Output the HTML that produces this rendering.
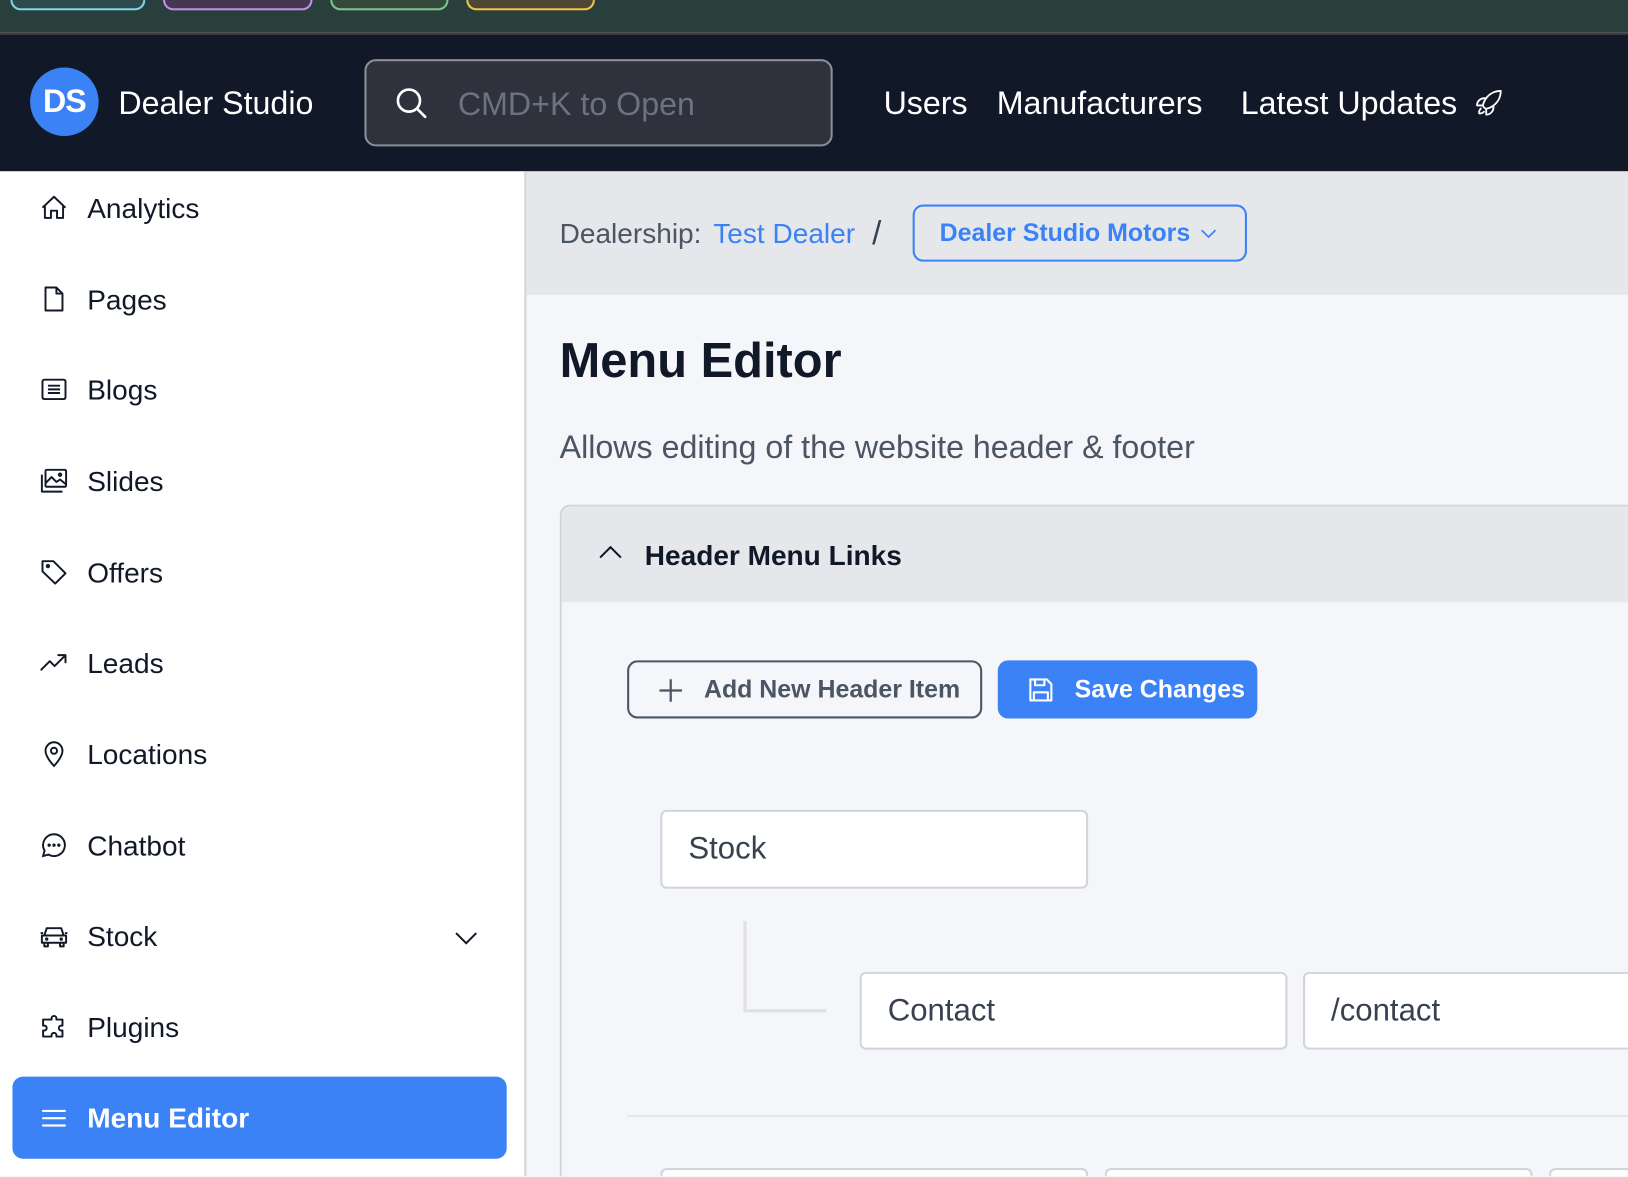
<!DOCTYPE html>
<html style="overflow:hidden"><head><meta charset="utf-8"><style>
html,body{margin:0;padding:0;width:1628px;height:1177px;overflow:hidden;background:#f5f6f9;font-family:"Liberation Sans",sans-serif}
#w{position:absolute;left:0;top:0;width:1568px;height:1133px;transform:scale(1.03827);transform-origin:0 0;background:#f5f6f9;overflow:hidden}
.a{position:absolute}
.si{position:absolute;left:38px;width:28px;height:28px}
.st{position:absolute;left:84px;font-size:27px;color:#111827;line-height:30px}
.inp{position:absolute;background:#fff;border:2px solid #d1d5db;border-radius:6px;box-sizing:border-box;font-size:30px;color:#374151;padding-left:25px;display:flex;align-items:center}
</style></head><body><div id="w">
<div class="a" style="left:0;top:0;width:1568px;height:31px;background:#293f3b"></div>
<div class="a" style="left:0;top:31px;width:1568px;height:2px;background:#3d3d3d"></div>
<div class="a" style="left:10px;top:0;width:126px;height:8px;border:2px solid #7dd3e8;border-top:none;border-radius:0 0 10px 10px;background:#2f4a4c"></div>
<div class="a" style="left:157px;top:0;width:140px;height:8px;border:2px solid #c48cf0;border-top:none;border-radius:0 0 10px 10px;background:#43384f"></div>
<div class="a" style="left:318px;top:0;width:110px;height:8px;border:2px solid #7cc58a;border-top:none;border-radius:0 0 10px 10px;background:#34493a"></div>
<div class="a" style="left:449px;top:0;width:120px;height:8px;border:2px solid #f2c34a;border-top:none;border-radius:0 0 10px 10px;background:#4d4833"></div>
<div class="a" style="left:0;top:33px;width:1568px;height:132px;background:#111827"></div>
<div class="a" style="left:29px;top:65px;width:66px;height:66px;border-radius:50%;background:#3b82f6;color:#fff;font-weight:bold;font-size:31px;text-align:center;line-height:66px;letter-spacing:-1px">DS</div>
<div class="a" style="left:114px;top:82px;font-size:31px;color:#fff;line-height:36px">Dealer Studio</div>
<div class="a" style="left:351px;top:57px;width:451px;height:84px;box-sizing:border-box;border:2px solid #8b8e96;border-radius:11px;background:#2f313d"></div>
<svg class="a" style="left:379px;top:82px" width="34" height="34" viewBox="0 0 24 24" fill="none" stroke="#fff" stroke-width="1.8" stroke-linecap="round"><circle cx="10.5" cy="10.5" r="7.5"/><path d="M16 16l5.5 5.5"/></svg>
<div class="a" style="left:441px;top:83px;font-size:31px;color:#6b7280;line-height:36px">CMD+K to Open</div>
<div class="a" style="left:851px;top:82px;font-size:31px;color:#fff;line-height:36px">Users</div>
<div class="a" style="left:960px;top:82px;font-size:31px;color:#fff;line-height:36px">Manufacturers</div>
<div class="a" style="left:1195px;top:82px;font-size:31px;color:#fff;line-height:36px">Latest Updates</div>
<svg class="a" style="left:1420px;top:85px" width="28" height="28" viewBox="0 0 24 24" fill="none" stroke="#fff" stroke-width="1.5" stroke-linejoin="round"><path d="M15.6 14.4a6 6 0 01-5.8 7.4v-4.8M15.6 14.4A15 15 0 0021.8 2.2 15 15 0 009.6 8.4m6 6a15 15 0 01-5.9 2.6M9.6 8.4a6 6 0 00-7.4 5.8H7m2.6-5.8A15 15 0 007 14.2m2.8 2.8c-.1 0-.2.1-.3.1a15 15 0 01-2.6-2.6l.1-.3M5.8 16.4a4.5 4.5 0 00-1.8 4.3 4.5 4.5 0 004.3-1.8"/></svg>
<div class="a" style="left:0;top:165px;width:505px;height:968px;background:#fff;border-right:2px solid #d1d5db"></div>
<svg class="si" style="top:186px" viewBox="0 0 24 24" fill="none" stroke="#111827" stroke-width="1.6" stroke-linejoin="round"><path d="M2.5 12L12 3l9.5 9M4.5 10v10.5h5v-6h5v6h5V10"/></svg>
<div class="st" style="top:186px">Analytics</div>
<svg class="si" style="top:274px" viewBox="0 0 24 24" fill="none" stroke="#111827" stroke-width="1.6" stroke-linejoin="round"><path d="M5 2.5h9l5 5v14H5z M14 2.5v5h5"/></svg>
<div class="st" style="top:274px">Pages</div>
<svg class="si" style="top:361px" viewBox="0 0 24 24" fill="none" stroke="#111827" stroke-width="1.6"><rect x="2.5" y="4" width="19" height="16" rx="1.5"/><path d="M7 9h10M7 12h10M7 15h10"/></svg>
<div class="st" style="top:361px">Blogs</div>
<svg class="si" style="top:449px" viewBox="0 0 24 24" fill="none" stroke="#111827" stroke-width="1.6" stroke-linejoin="round"><rect x="5" y="3" width="17" height="14" rx="1"/><path d="M2 7v14h17M5 14l5-5 4 4 3-2 5 4"/><circle cx="17" cy="7" r="1"/></svg>
<div class="st" style="top:449px">Slides</div>
<svg class="si" style="top:537px" viewBox="0 0 24 24" fill="none" stroke="#111827" stroke-width="1.6" stroke-linejoin="round"><path d="M2.5 3h9l10 10-8.5 8.5-10.5-10z"/><circle cx="7" cy="7" r="1"/></svg>
<div class="st" style="top:537px">Offers</div>
<svg class="si" style="top:624px" viewBox="0 0 24 24" fill="none" stroke="#111827" stroke-width="1.6" stroke-linejoin="round" stroke-linecap="round"><path d="M1.5 18l7-7 4 4 9-9M15.5 6h6v6"/></svg>
<div class="st" style="top:624px">Leads</div>
<svg class="si" style="top:712px" viewBox="0 0 24 24" fill="none" stroke="#111827" stroke-width="1.6"><path d="M12 22s-7-7-7-12.5a7 7 0 0114 0C19 15 12 22 12 22z"/><circle cx="12" cy="9.5" r="2.5"/></svg>
<div class="st" style="top:712px">Locations</div>
<svg class="si" style="top:800px" viewBox="0 0 24 24" fill="none" stroke="#111827" stroke-width="1.6"><path d="M12 3a9 9 0 00-7.8 13.5L3 21l4.5-1.2A9 9 0 1012 3z"/><circle cx="8" cy="12" r=".6" fill="#111827"/><circle cx="12" cy="12" r=".6" fill="#111827"/><circle cx="16" cy="12" r=".6" fill="#111827"/></svg>
<div class="st" style="top:800px">Chatbot</div>
<svg class="si" style="top:887px" viewBox="0 0 24 24" fill="none" stroke="#111827" stroke-width="1.6" stroke-linejoin="round"><path d="M2 12h20v6H2zM4 12l2-6h12l2 6M4 18v3h3v-3M17 18v3h3v-3M1 10h2M21 10h2"/><circle cx="6" cy="15" r=".6"/><circle cx="18" cy="15" r=".6"/></svg>
<div class="st" style="top:887px">Stock</div>
<svg class="a" style="left:436px;top:890px" width="26" height="26" viewBox="0 0 24 24" fill="none" stroke="#111827" stroke-width="1.8"><path d="M3 8l9 9 9-9"/></svg>
<svg class="si" style="top:975px" viewBox="0 0 24 24" fill="none" stroke="#111827" stroke-width="1.6" stroke-linejoin="round"><path d="M10 5a2 2 0 114 0v1h5v5h-1a2 2 0 100 4h1v5h-5v-1a2 2 0 10-4 0v1H3v-5h1a2 2 0 100-4H3V6h7z"/></svg>
<div class="st" style="top:975px">Plugins</div>
<div class="a" style="left:12px;top:1037px;width:476px;height:79px;border-radius:10px;background:#3b82f6"></div>
<svg class="si" style="top:1063px" viewBox="0 0 24 24" fill="none" stroke="#fff" stroke-width="1.8" stroke-linecap="round"><path d="M3 6h18M3 12h18M3 18h18"/></svg>
<div class="st" style="top:1062px;color:#fff;font-weight:bold">Menu Editor</div>
<div class="a" style="left:507px;top:165px;width:1061px;height:119px;background:#e5e7eb"></div>
<div class="a" style="left:539px;top:210px;font-size:27px;color:#4b5563;line-height:30px">Dealership:</div>
<div class="a" style="left:687px;top:210px;font-size:27px;color:#3b82f6;line-height:30px">Test Dealer</div>
<div class="a" style="left:840px;top:206px;font-size:32px;color:#374151;line-height:36px">/</div>
<div class="a" style="left:879px;top:197px;width:322px;height:55px;box-sizing:border-box;border:2px solid #3b82f6;border-radius:10px"></div>
<div class="a" style="left:905px;top:211px;font-size:24px;color:#3b82f6;font-weight:bold;line-height:28px">Dealer Studio Motors</div>
<svg class="a" style="left:1154px;top:215px" width="20" height="20" viewBox="0 0 24 24" fill="none" stroke="#3b82f6" stroke-width="2"><path d="M4 8l8 8 8-8"/></svg>
<div class="a" style="left:539px;top:319px;font-size:47px;font-weight:bold;color:#111827;line-height:56px">Menu Editor</div>
<div class="a" style="left:539px;top:413px;font-size:31px;color:#4b5563;line-height:36px">Allows editing of the website header &amp; footer</div>
<div class="a" style="left:539px;top:486px;width:1029px;height:647px;box-sizing:border-box;border:2px solid #d1d5db;border-right:none;border-bottom:none;border-radius:10px 0 0 0;background:#f5f6f9;overflow:hidden">
  <div style="height:92px;background:#e5e7eb"></div>
</div>
<svg class="a" style="left:576px;top:522px" width="24" height="20" viewBox="0 0 24 20" fill="none" stroke="#111827" stroke-width="2"><path d="M2 15l10-10 10 10"/></svg>
<div class="a" style="left:621px;top:519px;font-size:27px;font-weight:bold;color:#111827;line-height:32px">Header Menu Links</div>
<div class="a" style="left:604px;top:636px;width:342px;height:56px;box-sizing:border-box;border:2px solid #4b5563;border-radius:10px"></div>
<svg class="a" style="left:633px;top:652px" width="26" height="26" viewBox="0 0 24 24" fill="none" stroke="#4b5563" stroke-width="2"><path d="M12 2v20M2 12h20"/></svg>
<div class="a" style="left:678px;top:651px;font-size:24px;font-weight:bold;color:#4b5563;line-height:28px">Add New Header Item</div>
<div class="a" style="left:961px;top:636px;width:250px;height:56px;border-radius:10px;background:#3b82f6"></div>
<svg class="a" style="left:989px;top:651px" width="27" height="27" viewBox="0 0 24 24" fill="none" stroke="#fff" stroke-width="1.8" stroke-linejoin="round"><path d="M3 3h14l4 4v14H3z"/><path d="M7 3v5h8V3M6 21v-7h12v7"/></svg>
<div class="a" style="left:1035px;top:651px;font-size:24px;font-weight:bold;color:#fff;line-height:28px">Save Changes</div>
<div class="inp" style="left:636px;top:780px;width:412px;height:76px">Stock</div>
<div class="a" style="left:716px;top:887px;width:3px;height:88px;background:#e0e0e0"></div>
<div class="a" style="left:716px;top:972px;width:80px;height:3px;background:#e0e0e0"></div>
<div class="inp" style="left:828px;top:936px;width:412px;height:75px">Contact</div>
<div class="inp" style="left:1255px;top:936px;width:313px;height:75px;border-right:none;border-radius:6px 0 0 6px">/contact</div>
<div class="a" style="left:604px;top:1074px;width:964px;height:2px;background:#e5e7eb"></div>
<div class="inp" style="left:636px;top:1125px;width:412px;height:8px;border-bottom:none;border-radius:6px 6px 0 0"></div>
<div class="inp" style="left:1064px;top:1125px;width:412px;height:8px;border-bottom:none;border-radius:6px 6px 0 0"></div>
<div class="inp" style="left:1492px;top:1125px;width:76px;height:8px;border-bottom:none;border-right:none;border-radius:6px 0 0 0"></div>
</div></body></html>
